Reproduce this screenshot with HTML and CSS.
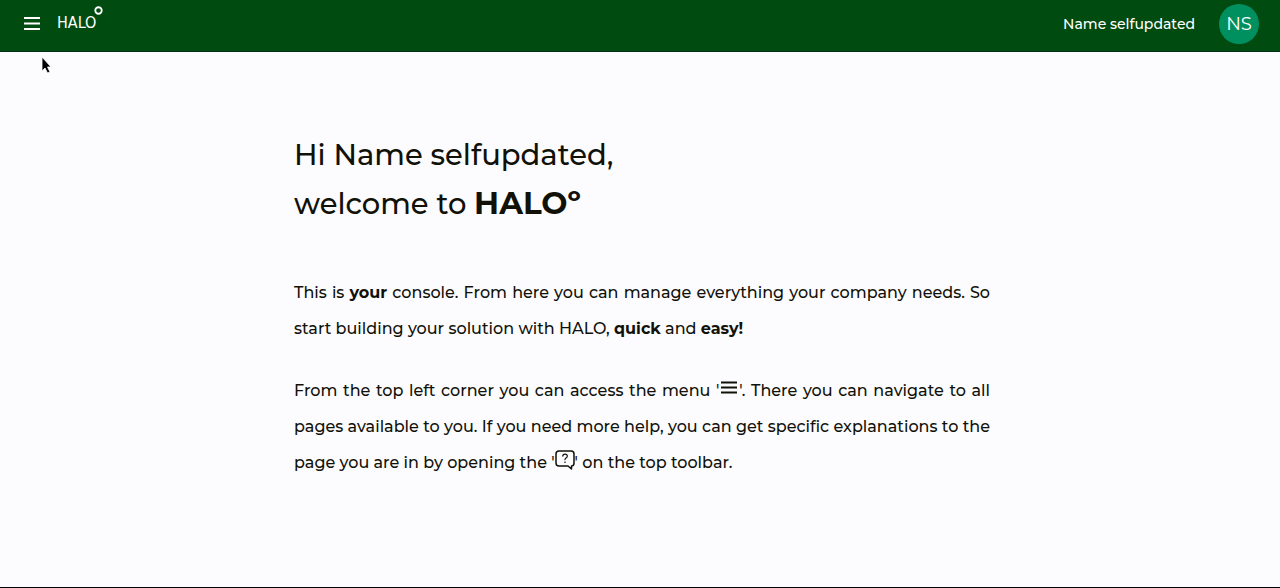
FILE: index.html
```html
<!DOCTYPE html>
<html lang="en">
<head>
<meta charset="utf-8">
<meta name="viewport" content="width=device-width, initial-scale=1">
<title>HALO</title>
<link rel="stylesheet" href="styles.css">
</head>
<body>
<header class="topbar">
  <button class="menu-button" type="button" aria-label="Menu">
    <svg class="menu-icon" viewBox="0 0 16 13" aria-hidden="true"><path d="M0 1h16M0 6.5h16M0 12h16" stroke="currentColor" stroke-width="2"/></svg>
  </button>
  <a class="logo" href="#"><span>HALO</span><svg class="logo-ring" viewBox="0 0 10 10" aria-hidden="true"><circle cx="5" cy="5" r="3.6" fill="none" stroke="currentColor" stroke-width="2"/></svg></a>
  <span class="user-name">Name selfupdated</span>
  <button class="avatar" type="button">NS</button>
</header>
<main class="content">
  <h1 class="greeting">Hi Name selfupdated,<br>welcome to <strong>HALOº</strong></h1>
  <p class="text">This is <strong>your</strong> console. From here you can manage everything your company needs. So start building your solution with HALO, <strong>quick</strong> and <strong>easy!</strong></p>
  <p class="text">From the top left corner you can access the menu '<svg class="inline-menu" viewBox="0 0 16 13" aria-hidden="true"><path d="M0 1.5h16M0 6.5h16M0 11.5h16" stroke="currentColor" stroke-width="2"/></svg>'. There you can navigate to all pages available to you. If you need more help, you can get specific explanations to the page you are in by opening the '<svg class="inline-help" viewBox="0 0 20 20" aria-hidden="true"><path d="M4 1h12Q19 1 19 4v9Q19 16 16.500 16v3L13 16H4Q1 16 1 13V4Q1 1 4 1z" fill="none" stroke="currentColor" stroke-width="1.500" stroke-linejoin="round"/><path d="M7.700 6.500Q7.700 4.200 10 4.200T12.300 6.200Q12.300 7.300 11 8T10 10.200M10 11.500v1.500" fill="none" stroke="currentColor" stroke-width="1.200"/></svg>' on the top toolbar.</p>
</main>
<svg class="pointer" viewBox="0 0 11 18" aria-hidden="true"><path d="M1 1v14l3-3 2.500 5 2.500-1-2.500-5H10z" fill="#000" stroke="#fff" stroke-width=".8"/></svg>
</body>
</html>
```
FILE: styles.css
```css
* { box-sizing: border-box; }
body {
  margin: 0;
  min-height: 100vh;
  display: flex;
  flex-direction: column;
  background: #fcfcff;
  border-bottom: 1px solid #000;
  color: #111108;
  font-family: Montserrat, Inter, sans-serif;
}
.topbar {
  display: flex;
  align-items: center;
  height: 52px;
  padding: 0 21px 4px 24px;
  background: #004b10;
  border-bottom: 1px solid #00301c;
  color: #fff;
}
.menu-button, .avatar { border: 0; padding: 0; color: inherit; font-family: inherit; cursor: pointer; }
.menu-button { display: flex; background: none; }
.menu-icon { width: 16px; height: 13px; }
.logo {
  display: flex;
  align-items: flex-start;
  height: 36px;
  margin-left: 17px;
  color: inherit;
  text-decoration: none;
  font: 16px/34px "Liberation Sans Narrow", "DejaVu Sans Condensed", sans-serif;
}
.logo-ring { width: 9px; height: 9px; margin-left: -2px; }
.user-name { margin-left: auto; font-size: 14px; font-weight: 500; }
.avatar {
  width: 40px;
  height: 40px;
  margin-left: 24px;
  border-radius: 50%;
  background: #009060;
  font-size: 18px;
}
.content { width: 100%; max-width: 744px; margin: 0 auto; padding: 79px 22px 40px 26px; }
.greeting { margin: 0 0 47px; font-size: 29px; line-height: 48px; font-weight: 500; }
.greeting strong { font-size: 31px; font-weight: 700; }
.text { margin: 0 0 26px; font-size: 16px; line-height: 36px; font-weight: 500; text-align: justify; }
.text strong { font-weight: 700; }
.inline-menu { width: 16px; height: 13px; margin: 0 2px; vertical-align: 2px; }
.inline-help { width: 20px; height: 20px; vertical-align: -2px; }
.pointer { position: absolute; left: 41px; top: 56px; width: 11px; height: 18px; }
```
